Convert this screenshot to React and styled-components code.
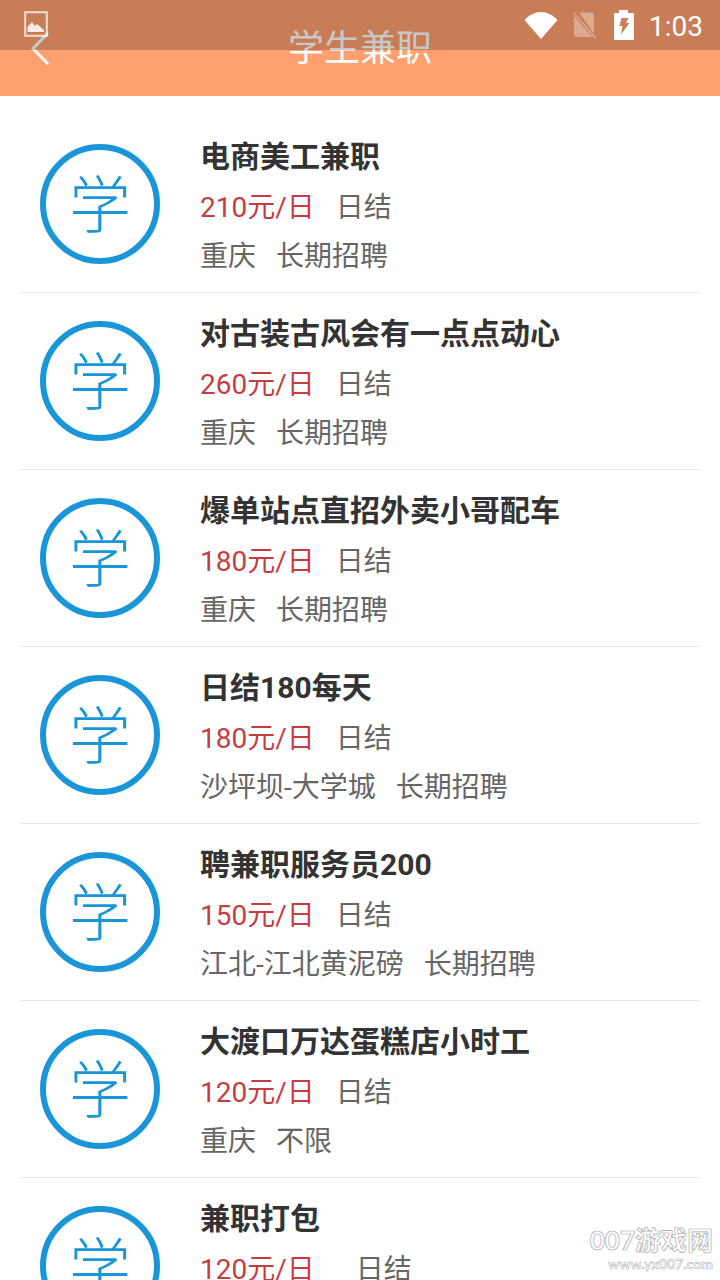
import React from 'react';
import styled, { createGlobalStyle } from 'styled-components';

const CJK = `Roboto, "Noto Sans CJK SC", sans-serif`;

const Global = createGlobalStyle`
  html, body { margin: 0; padding: 0; background: #fff; }
  body { font-family: ${CJK}; }
`;

const Page = styled.div`
  position: relative;
  width: 720px;
  height: 1280px;
  overflow: hidden;
  background: #fff;
`;

const Header = styled.header`
  position: relative;
  height: 96px;
  background: #ffa06e;
  display: flex;
  align-items: flex-start;
  justify-content: center;
`;

const Title = styled.h1`
  margin: 0;
  margin-top: 28px;
  font-size: 36px;
  line-height: 42px;
  font-weight: 400;
  color: #fff;
`;

const BackIcon = styled.svg`
  position: absolute;
  left: 30px;
  top: 31px;
  width: 20px;
  height: 34px;
`;

const StatusBar = styled.div`
  position: absolute;
  inset: 0 0 auto 0;
  height: 50px;
  background: rgba(0, 0, 0, 0.215);
  display: flex;
  align-items: center;
  padding: 0 17px 0 24px;
  box-sizing: border-box;
`;

const StatusRight = styled.div`
  margin-left: auto;
  display: flex;
  align-items: center;
`;

const Time = styled.span`
  font-family: Roboto, sans-serif;
  font-size: 28px;
  color: #fff;
  margin-left: 15px;
  line-height: 50px;
  padding-top: 3px;
`;

const List = styled.ul`
  list-style: none;
  margin: 20px 20px 0;
  padding: 0;
`;

const Row = styled.li`
  height: 177px;
  box-sizing: border-box;
  border-bottom: 1px solid #e8e8e8;
  display: flex;
  align-items: center;
  padding-left: 20px;
`;

const Badge = styled.div`
  width: 120px;
  height: 120px;
  box-sizing: border-box;
  border: 6px solid #1a96d8;
  border-radius: 50%;
  display: flex;
  align-items: center;
  justify-content: center;
  padding-bottom: 6px;
  color: #1a96d8;
  font-family: "Noto Sans CJK SC", sans-serif;
  font-size: 62px;
  font-weight: 300;
  line-height: 1;
  flex: none;
`;

const Info = styled.div`
  margin-left: 40px;
  padding-top: 5px;
  display: flex;
  flex-direction: column;
`;

const JobTitle = styled.div`
  font-size: 30px;
  font-weight: 700;
  line-height: 40px;
  color: #333;
  white-space: nowrap;
`;

const Line = styled.div`
  display: flex;
  font-size: 28px;
  line-height: 40px;
  min-height: 40px;
  color: #666;
  white-space: nowrap;
  margin-top: ${p => p.$top}px;
`;

const Salary = styled.span`
  color: #c63d3f;
  margin-right: ${p => p.$wide ? 41 : 21}px;
`;

const Place = styled.span`
  margin-right: 20px;
`;

const Watermark = styled.div`
  position: absolute;
  right: 7px;
  bottom: 7px;
  display: flex;
  flex-direction: column;
  align-items: flex-end;
  color: #fff;
  -webkit-text-stroke: 0.7px #aaa;
  font-family: Lato, "Noto Sans CJK SC", sans-serif;
`;

const WatermarkName = styled.div`
  font-size: 26px;
  line-height: 30px;
  font-weight: 700;
`;

const WatermarkUrl = styled.div`
  font-size: 14px;
  line-height: 18px;
  font-weight: 700;
  -webkit-text-stroke-width: 0.5px;
`;

const jobs = [
  ['电商美工兼职', '210元/日', '重庆', '长期招聘'],
  ['对古装古风会有一点点动心', '260元/日', '重庆', '长期招聘'],
  ['爆单站点直招外卖小哥配车', '180元/日', '重庆', '长期招聘'],
  ['日结180每天', '180元/日', '沙坪坝-大学城', '长期招聘'],
  ['聘兼职服务员200', '150元/日', '江北-江北黄泥磅', '长期招聘'],
  ['大渡口万达蛋糕店小时工', '120元/日', '重庆', '不限'],
  ['兼职打包', '120元/日', '', '', true],
];

export default function App() {
  return (
    <Page>
      <Global />
      <Header>
        <Title>学生兼职</Title>
        <BackIcon viewBox="0 0 20 34" fill="none">
          <path d="M17 3 L3 17.5 L17 32" stroke="#fff" strokeWidth="3.2" strokeLinecap="round" strokeLinejoin="round" />
        </BackIcon>
        <StatusBar>
          <svg width="24" height="26" viewBox="0 0 24 26" style={{ marginTop: -2 }}>
            <rect x="1.2" y="1.2" width="21.6" height="23.6" fill="none" stroke="#fff" strokeOpacity=".75" strokeWidth="2" />
            <path d="M3.5 21 V16 L8 11 L11 15 L13 13 L20 19 V21 Z" fill="#fff" fillOpacity=".85" />
          </svg>
          <StatusRight>
            <svg width="34" height="28" viewBox="0 0 34 28">
              <path d="M0.5 9 C5 4 11 1 17 1 C23 1 29 4 33.5 9 L17 28 Z" fill="#fff" />
            </svg>
            <svg width="24" height="28" viewBox="0 0 24 28" style={{ marginLeft: 15 }}>
              <path d="M6 1.5 H18 a3 3 0 0 1 3 3 V23 Z M1 5 L19.5 26 H4 a3 3 0 0 1 -3 -3 Z" fill="#fff" fillOpacity=".35" />
              <path d="M0.5 1.5 L22.5 27" stroke="#fff" strokeOpacity=".35" strokeWidth="1.5" />
            </svg>
            <svg width="20" height="30" viewBox="0 0 20 30" style={{ marginLeft: 17 }}>
              <path d="M5 0 H14 V3 H20 V30 H0 V3 H5 Z" fill="#fff" />
              <path d="M7.5 8 H14.5 L12 13 H15.5 L7 24.5 L8.5 16 H5.5 Z" fill="#c87f58" />
            </svg>
            <Time>1:03</Time>
          </StatusRight>
        </StatusBar>
      </Header>
      <List>
        {jobs.map(([title, pay, place, term, wide], i) => (
          <Row key={i}>
            <Badge>学</Badge>
            <Info>
              <JobTitle>{title}</JobTitle>
              <Line $top={11}>
                <Salary $wide={wide}>{pay}</Salary>
                <span>日结</span>
              </Line>
              <Line $top={9}>
                <Place>{place}</Place>
                <span>{term}</span>
              </Line>
            </Info>
          </Row>
        ))}
      </List>
      <Watermark>
        <WatermarkName>007游戏网</WatermarkName>
        <WatermarkUrl>www.yx007.com</WatermarkUrl>
      </Watermark>
    </Page>
  );
}
